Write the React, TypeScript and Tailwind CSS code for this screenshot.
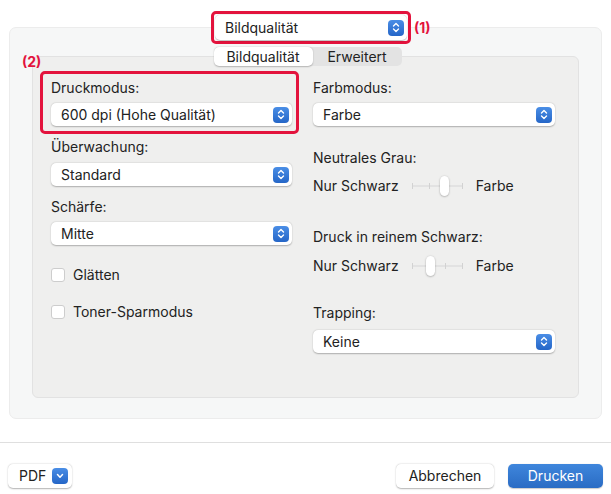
import React from "react";

const red = "border-[#e3133d]";

function Stepper() {
  return (
    <span className="flex h-[16px] w-[16px] items-center justify-center rounded-[4px] bg-gradient-to-b from-[#4a8ee6] to-[#2566c7]">
      <svg width="8" height="11" viewBox="0 0 8 11" fill="none">
        <path d="M1.5 4 L4 1.5 L6.5 4" stroke="white" strokeWidth="1.4" strokeLinecap="round" strokeLinejoin="round" />
        <path d="M1.5 7 L4 9.5 L6.5 7" stroke="white" strokeWidth="1.4" strokeLinecap="round" strokeLinejoin="round" />
      </svg>
    </span>
  );
}

function Popup({ value, className = "" }: { value: string; className?: string }) {
  return (
    <div
      className={`flex h-[23px] items-center justify-between rounded-[5px] bg-white pl-[10px] pr-[3px] shadow-[0_0.5px_1.5px_rgba(0,0,0,0.28)] ${className}`}
    >
      <span>{value}</span>
      <Stepper />
    </div>
  );
}

function Slider({ knob }: { knob: number }) {
  const ticks = [0, 17, 33, 50];
  return (
    <div className="relative mx-[13px] h-[20px] w-[51px]">
      <div className="absolute left-0 right-0 top-[9px] h-[2px] bg-[#e2e2e2]" />
      {ticks.map((t) => (
        <div key={t} className="absolute top-[7px] h-[6px] w-[1px] bg-[#d2d2d2]" style={{ left: t }} />
      ))}
      <div
        className="absolute top-0 h-[20px] w-[9px] rounded-full bg-white shadow-[0_0.5px_2px_rgba(0,0,0,0.35)]"
        style={{ left: knob - 4 }}
      />
    </div>
  );
}

function Check({ label, className = "" }: { label: string; className?: string }) {
  return (
    <div className={`flex h-[16px] items-center gap-[8px] ${className}`}>
      <span className="h-[14px] w-[14px] rounded-[3px] border border-[#cdcdcd] bg-white" />
      <span>{label}</span>
    </div>
  );
}

export default function App() {
  return (
    <div className="relative flex h-[494px] w-[611px] flex-col bg-white font-['Inter',sans-serif] text-[14px] leading-[16px] text-[#222222]">
      {/* top popup */}
      <div className="relative z-10 flex items-center pl-[211px] pt-[11px]">
        <div className={`h-[33px] w-[200px] rounded-[5px] border-[3px] ${red} bg-white p-[1px]`}>
          <Popup value="Bildqualität" className="h-[25px] pl-[8px]" />
        </div>
        <span className="ml-[3px] font-bold text-[#e3133d]">(1)</span>
      </div>

      {/* outer panel */}
      <div className="mx-[9px] mt-[-17px] flex h-[392px] flex-col rounded-[7px] border border-[#ececec] bg-[#f6f7f7] px-[22px] pb-[20px] pt-[28px]">
        <div className="relative flex flex-1 flex-col rounded-[6px] border border-[#e2e2e2] bg-[#efefee]">
          {/* tabs */}
          <div className="mt-[-10px] flex justify-center pl-[4px]">
            <div className="flex h-[19px] rounded-[5px] bg-[#e3e3e3]">
              <div className="flex w-[99px] items-center justify-center rounded-[5px] bg-white shadow-[0_0.5px_1.5px_rgba(0,0,0,0.25)]">
                Bildqualität
              </div>
              <div className="flex w-[89px] items-center justify-center">Erweitert</div>
            </div>
          </div>

          {/* annotation (2) */}
          <span className="absolute left-[-11px] top-[-3px] font-bold text-[#e3133d]">(2)</span>
          <div className={`pointer-events-none absolute left-[7px] top-[14px] h-[63px] w-[259px] rounded-[5px] border-[3px] ${red}`} />

          <div className="flex gap-[21px] pl-[18px] pt-[14px]">
            {/* left column */}
            <div className="flex w-[241px] flex-col">
              <div>Druckmodus:</div>
              <Popup value="600 dpi (Hohe Qualität)" className="mt-[7px]" />
              <div className="mt-[13px]">Überwachung:</div>
              <Popup value="Standard" className="mt-[8px]" />
              <div className="mt-[13px]">Schärfe:</div>
              <Popup value="Mitte" className="mt-[7px]" />
              <Check label="Glätten" className="mt-[22px]" />
              <Check label="Toner-Sparmodus" className="mt-[21px]" />
            </div>

            {/* right column */}
            <div className="flex w-[242px] flex-col">
              <div>Farbmodus:</div>
              <Popup value="Farbe" className="mt-[7px]" />
              <div className="mt-[24px]">Neutrales Grau:</div>
              <div className="mt-[10px] flex items-center">
                <span>Nur Schwarz</span>
                <Slider knob={32} />
                <span>Farbe</span>
              </div>
              <div className="mt-[33px]">Druck in reinem Schwarz:</div>
              <div className="mt-[11px] flex items-center">
                <span>Nur Schwarz</span>
                <Slider knob={18} />
                <span>Farbe</span>
              </div>
              <div className="mt-[29px]">Trapping:</div>
              <Popup value="Keine" className="mt-[9px]" />
            </div>
          </div>
        </div>
      </div>

      {/* footer */}
      <div className="mt-[23px] h-px w-full bg-[#dfdfdf]" />
      <div className="flex items-center justify-between px-[8px] pt-[21px]">
        <div className="flex h-[24px] w-[64px] items-center justify-between rounded-[5px] bg-white pl-[11px] pr-[4px] shadow-[0_0.5px_1.5px_rgba(0,0,0,0.3)]">
          <span>PDF</span>
          <span className="flex h-[16px] w-[16px] items-center justify-center rounded-[4px] bg-gradient-to-b from-[#4a8ee6] to-[#2566c7]">
            <svg width="8" height="6" viewBox="0 0 8 6" fill="none">
              <path d="M1.5 1.5 L4 4.2 L6.5 1.5" stroke="white" strokeWidth="1.5" strokeLinecap="round" strokeLinejoin="round" />
            </svg>
          </span>
        </div>
        <div className="flex gap-[14px]">
          <button className="h-[24px] w-[98px] rounded-[5px] bg-white shadow-[0_0.5px_1.5px_rgba(0,0,0,0.3)]">
            Abbrechen
          </button>
          <button className="h-[24px] w-[95px] rounded-[5px] bg-gradient-to-b from-[#3f86dc] to-[#2a6cc4] text-white shadow-[0_0.5px_1px_rgba(0,0,0,0.2)]">
            Drucken
          </button>
        </div>
      </div>
    </div>
  );
}
